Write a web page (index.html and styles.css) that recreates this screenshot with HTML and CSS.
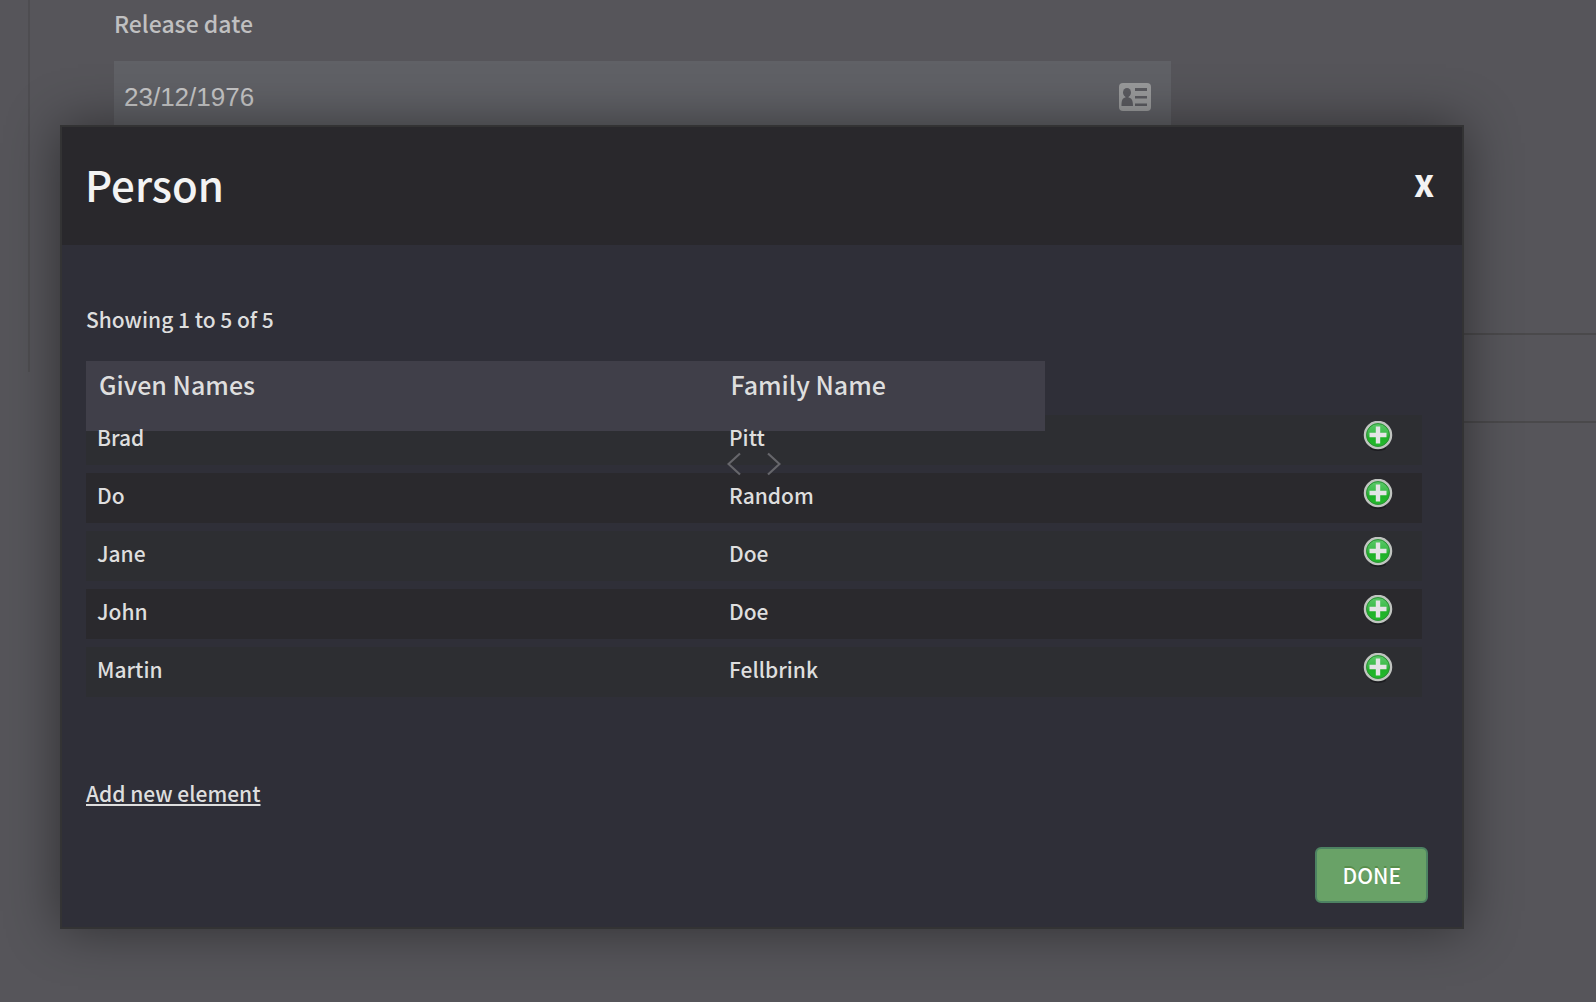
FILE: index.html
```html
<!DOCTYPE html>
<html lang="en">
<head>
<meta charset="utf-8">
<title>Person</title>
<link rel="stylesheet" href="styles.css">
</head>
<body>
<svg class="defs" aria-hidden="true">
  <defs>
    <linearGradient id="green" x1="0" y1="0" x2="0" y2="1">
      <stop offset="0" stop-color="#5ccb6b"/>
      <stop offset="0.45" stop-color="#3dbb4a"/>
      <stop offset="0.6" stop-color="#1fb128"/>
      <stop offset="1" stop-color="#22bb2c"/>
    </linearGradient>
    <symbol id="plus" viewBox="0 0 30 30">
      <ellipse cx="15" cy="27" rx="8" ry="3" fill="#1c1c20"/>
      <circle cx="15" cy="14" r="13" fill="url(#green)" stroke="#c0c4c0" stroke-width="2.500"/>
      <circle cx="15" cy="14" r="11.400" fill="none" stroke="#2f8f38" stroke-width="1"/>
      <path d="M15 5.500v17M6.500 14h17" stroke="#e4e4e6" stroke-width="4.400"/>
    </symbol>
  </defs>
</svg>
<main class="page">
  <section class="form">
    <label class="form-label" for="release">Release date</label>
    <div class="field">
      <input class="field-input" id="release" type="text" value="23/12/1976">
      <svg class="card-icon" viewBox="0 0 32 28" aria-hidden="true">
        <rect width="32" height="28" rx="4" fill="#999a9b"/>
        <g fill="#5b5b60">
          <ellipse cx="8" cy="9.500" rx="4" ry="4.500"/>
          <path d="M6.500 13h3v1.500c3 .5 4.500 2.500 4.500 8.500H2.500c0-6 1-8 4-8.500z"/>
          <path d="M16 5h12v3H16zM16 13h12v2.500H16zM16 20.500h12V23H16z"/>
        </g>
      </svg>
    </div>
  </section>
  <div class="band"></div>
</main>
<div class="dialog" role="dialog" aria-labelledby="title">
  <header class="dialog-head">
    <h1 class="title" id="title">Person</h1>
    <button class="close" type="button">X</button>
  </header>
  <div class="dialog-body">
    <p class="summary">Showing 1 to 5 of 5</p>
    <div class="results">
      <table class="people">
        <thead>
          <tr class="people-head"><th>Given Names</th><th>Family Name</th></tr>
        </thead>
        <tbody class="people-body">
          <tr><td>Brad</td><td>Pitt</td><td><button class="add" type="button" aria-label="Add Brad Pitt"><svg class="plus"><use href="#plus"/></svg></button></td></tr>
          <tr><td>Do</td><td>Random</td><td><button class="add" type="button" aria-label="Add Do Random"><svg class="plus"><use href="#plus"/></svg></button></td></tr>
          <tr><td>Jane</td><td>Doe</td><td><button class="add" type="button" aria-label="Add Jane Doe"><svg class="plus"><use href="#plus"/></svg></button></td></tr>
          <tr><td>John</td><td>Doe</td><td><button class="add" type="button" aria-label="Add John Doe"><svg class="plus"><use href="#plus"/></svg></button></td></tr>
          <tr><td>Martin</td><td>Fellbrink</td><td><button class="add" type="button" aria-label="Add Martin Fellbrink"><svg class="plus"><use href="#plus"/></svg></button></td></tr>
        </tbody>
      </table>
      <svg class="arrows" viewBox="0 0 54 24" aria-hidden="true">
        <path d="M13 1.500 1.500 12 13 22.500M41 1.500 52.500 12 41 22.500" fill="none" stroke="#66666b" stroke-width="2.200"/>
      </svg>
    </div>
    <a class="new-link" href="#new">Add new element</a>
    <div class="actions"><button class="done" type="button">DONE</button></div>
  </div>
</div>
</body>
</html>
```
FILE: styles.css
```css
* {
  box-sizing: border-box;
}

body {
  margin: 0;
  min-height: 100vh;
  background: #56555a;
  color: #dedede;
  font-family: "Noto Sans CJK SC", sans-serif;
  font-size: 21px;
  font-weight: 500;
  line-height: 32px;
}

button {
  font-family: inherit;
  font-weight: inherit;
  cursor: pointer;
}

.defs {
  position: absolute;
  width: 0;
  height: 0;
}

.form {
  height: 372px;
  margin-left: 28px;
  padding: 7px 0 0 84px;
  border-left: 2px solid #4e4d51;
}

.form-label {
  display: block;
  margin-bottom: 22px;
  color: #c0c0c1;
  font-size: 23px;
}

.field {
  display: flex;
  align-items: center;
  width: 71.3%;
  height: 72px;
  padding: 0 20px 0 10px;
  background: #606166;
}

.field-input {
  flex: 1;
  min-width: 0;
  padding: 0;
  border: 0;
  outline: 0;
  background: none;
  color: #c6c6c7;
  font: 26px/32px "Liberation Sans", sans-serif;
}

.card-icon {
  width: 32px;
  height: 28px;
}

.band {
  height: 90px;
  margin: -39px 0 0 60px;
  border: solid #4a494b;
  border-width: 2px 0;
}

.dialog {
  position: absolute;
  top: 125px;
  left: 60px;
  right: 132px;
  border: 2px solid #333334;
  background: #2f2f38;
  box-shadow: 0 0 50px rgba(0, 0, 0, 0.45);
}

.dialog-head {
  display: flex;
  align-items: center;
  justify-content: space-between;
  height: 118px;
  padding: 0 24px 4px 23px;
  background: #29282c;
}

.title {
  margin: 0;
  color: #f3f3f3;
  font-size: 42px;
  font-weight: 500;
  line-height: 60px;
}

.close {
  padding: 0 4px;
  border: 0;
  background: none;
  color: #f3f3f3;
  font-size: 30px;
  font-weight: 900;
  line-height: 40px;
}

.dialog-body {
  padding: 58px 34px 24px 24px;
}

.summary {
  margin: 0 0 26px;
}

.results {
  position: relative;
  margin: 0 6px 80px 0;
}

.people {
  display: block;
}

.people thead {
  display: block;
}

.people-head {
  position: relative;
  display: grid;
  grid-template-columns: 632fr 328fr;
  width: 71.8%;
  height: 70px;
  margin-bottom: -16px;
  background: #403f49;
}

.people-head th {
  padding: 7px 13px;
  font-size: 25px;
  font-weight: 500;
  text-align: left;
}

.people-body {
  display: grid;
  gap: 8px;
}

.people-body tr {
  display: grid;
  grid-template-columns: 632fr 632fr 72fr;
  height: 50px;
  background: #2d2e32;
}

.people-body tr:nth-child(even) {
  background: #2a292d;
}

.people-body td {
  position: relative;
  padding: 6px 11px;
}

.people-body td:last-child {
  padding-left: 13px;
}

.add {
  display: block;
  padding: 0;
  border: 0;
  background: none;
}

.plus {
  display: block;
  width: 30px;
  height: 30px;
}

.arrows {
  position: absolute;
  top: 91px;
  left: 48%;
  width: 54px;
  height: 24px;
}

.new-link {
  color: inherit;
  text-decoration-thickness: 2px;
  text-underline-offset: 2px;
}

.actions {
  display: flex;
  justify-content: flex-end;
  margin-top: 38px;
}

.done {
  height: 56px;
  padding: 0 25px;
  border: 2px solid #4d8262;
  border-radius: 6px;
  background: #69a267;
  color: #fff;
  font-size: 21px;
  line-height: 32px;
  text-shadow: 0 -2px 0 rgba(60, 110, 30, 0.4);
}
```
